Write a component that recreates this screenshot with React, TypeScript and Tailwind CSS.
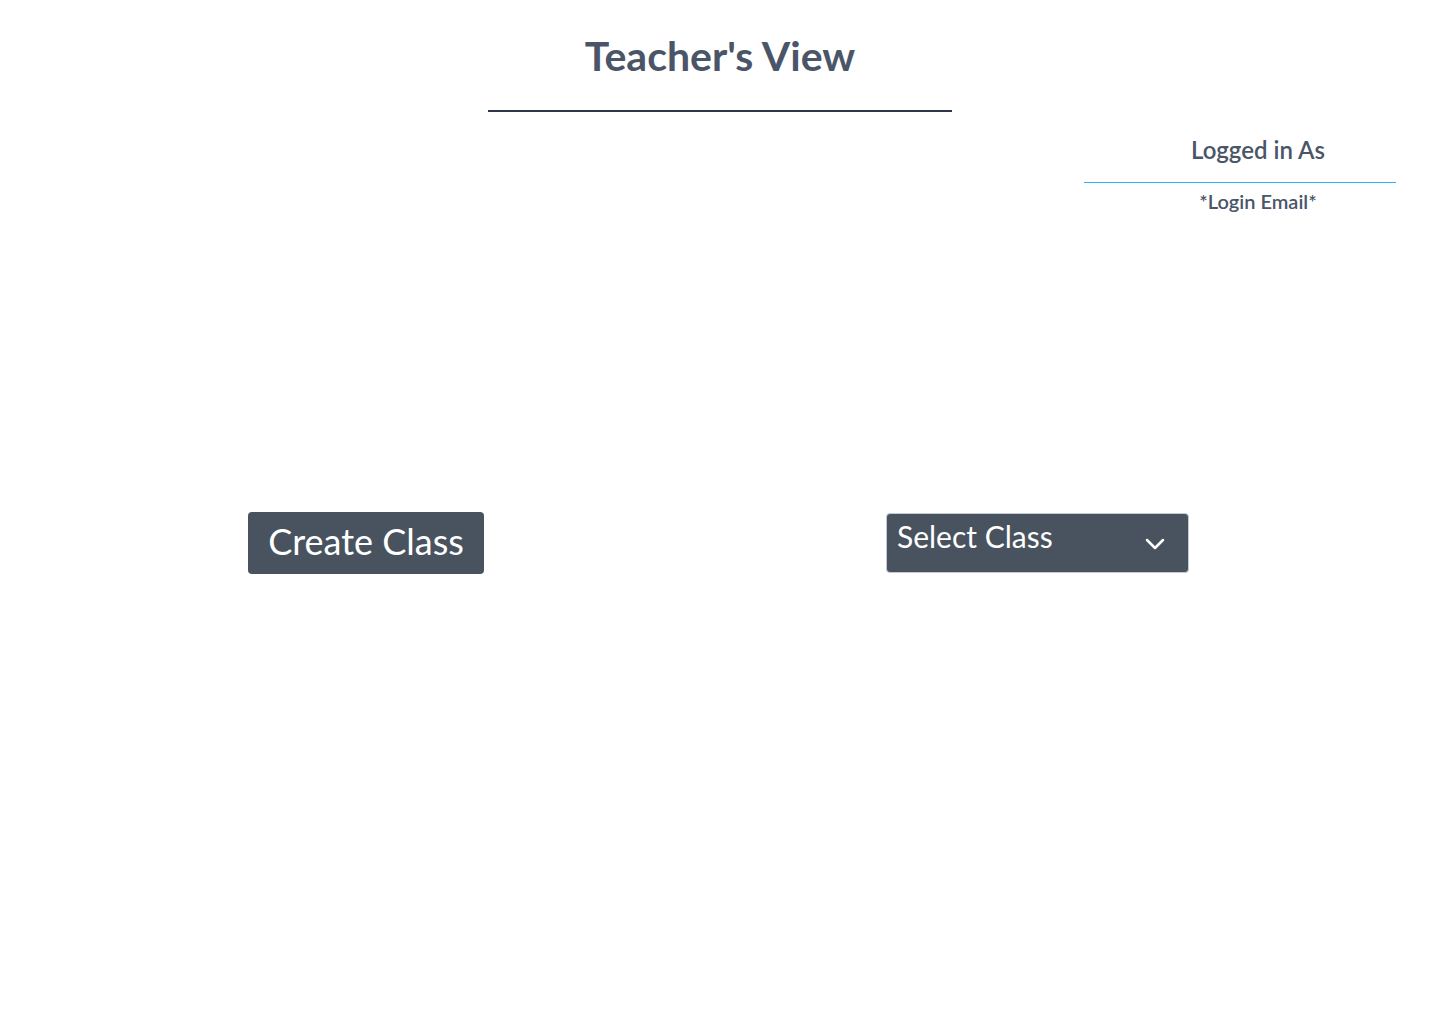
import React from 'react';

export default function App() {
    return (
        <div className="min-h-[1024px] bg-white text-[#4a5568]" style={{ fontFamily: 'Lato, "Open Sans", sans-serif' }}>
            {/* Header */}
            <div className="pt-[30px] flex flex-col items-center">
                <h1 className="text-[41px] font-bold leading-[52px]">Teacher's View</h1>
                <div className="w-[464px] h-[2px] bg-[#2d3748] mt-[28px]" />
            </div>

            {/* Logged in block */}
            <div className="flex justify-end pr-[44px] mt-[20px]">
                <div className="w-[312px] flex flex-col">
                    <p className="text-[24px] font-semibold leading-[36px] text-center pl-[36px]">Logged in As</p>
                    <div className="w-full h-px bg-[#29b6f6] mt-[14px]" />
                    <p className="text-[20px] font-semibold leading-[28px] mt-[4px] text-center pl-[36px]">*Login Email*</p>
                </div>
            </div>

            {/* Actions */}
            <div className="flex items-start mt-[297px] pl-[248px]">
                <button className="w-[236px] h-[62px] rounded-[4px] bg-[#48535f] text-white text-[36px] leading-none flex items-center justify-center pb-[5px]">
                    Create Class
                </button>
                <button className="ml-[402px] mt-px w-[303px] h-[60px] rounded-[4px] bg-[#48535f] border border-[#c4cad2] text-white flex items-start justify-between pl-[10px] pr-[23px]">
                    <span className="text-[30px] leading-none mt-[7px]">Select Class</span>
                    <svg className="mt-[24px]" width="20" height="12" viewBox="0 0 20 12" fill="none">
                        <path d="M2 2l8 8 8-8" stroke="white" strokeWidth="2.5" strokeLinecap="round" strokeLinejoin="round" />
                    </svg>
                </button>
            </div>
        </div>
    );
}
